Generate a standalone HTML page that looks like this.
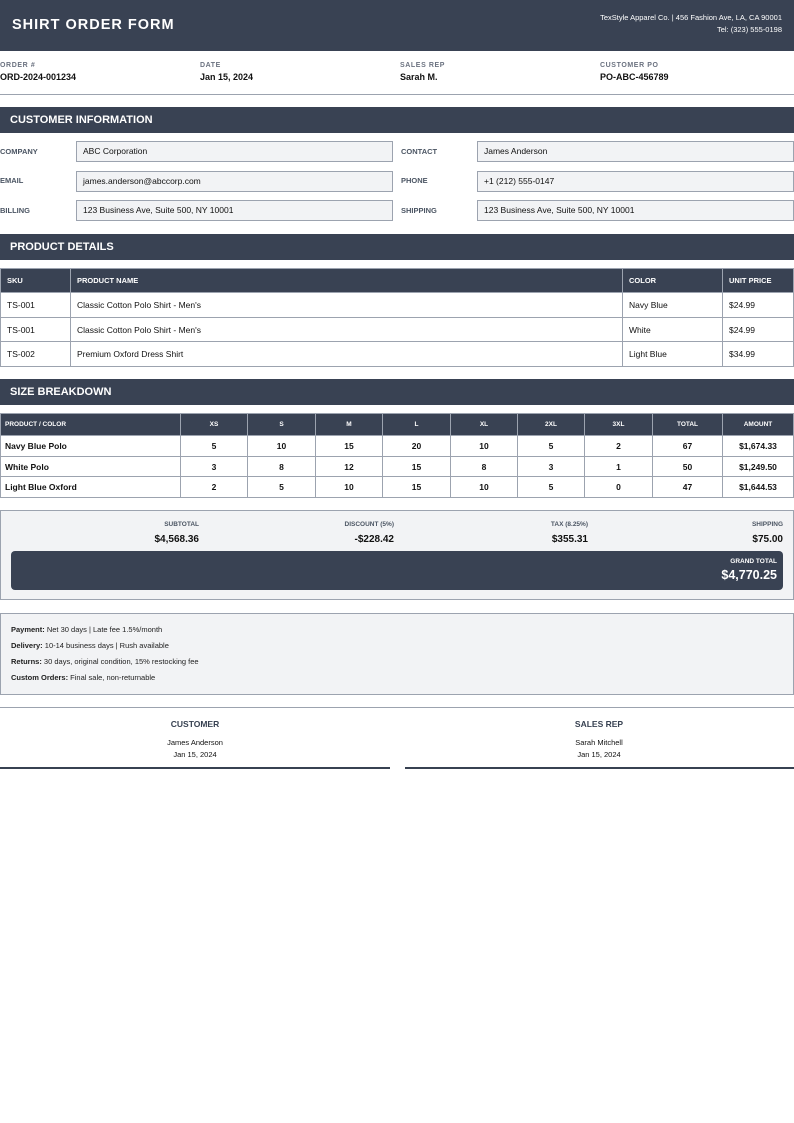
<!DOCTYPE html>
<html><head><meta charset="utf-8"><style>
*{margin:0;padding:0;box-sizing:border-box}
body{width:794px;height:1123px;background:#fff;font-family:"Liberation Sans",Arial,sans-serif;color:#111;position:relative;overflow:hidden}
.a{position:absolute;white-space:nowrap}
.dark{background:#394253;color:#fff}
.bar{position:absolute;left:0;width:794px;height:26px;background:#394253;color:#fff;font-weight:bold;font-size:11px;line-height:26px;padding-left:10px}
.lbl{font-size:7px;color:#6b7280;font-weight:bold;letter-spacing:.6px}
.val{font-size:9px;font-weight:bold}
.fl{font-size:7.5px;font-weight:bold;color:#4b5563}
.in{position:absolute;background:#f2f3f5;border:1px solid #9ca3af;font-size:8.5px;line-height:19px;padding-left:6px;height:21px}
table{position:absolute;left:0;width:794px;border-collapse:collapse;font-size:8.5px}
td,th{border:1px solid #9ca3af;padding:0 6px}
th{background:#394253;color:#fff;text-align:left;font-size:7.5px}
.sz th,.sz td{text-align:center;padding:0 4px}
.sz th{font-size:6.5px}
.sz td{font-weight:bold;font-size:8.5px}
.sz td:first-child,.sz th:first-child{text-align:left}
.r{text-align:right}
.sl{font-size:6.5px;color:#4b5563;font-weight:bold}
</style></head><body>
<div class="a dark" style="left:0;top:0;width:794px;height:51px"></div>
<div class="a" style="left:12px;top:17px;font-size:14.5px;font-weight:bold;color:#fff;letter-spacing:1px">SHIRT ORDER FORM</div>
<div class="a" style="right:12px;top:12px;font-size:7.5px;color:#fff;text-align:right;line-height:12px">TexStyle Apparel Co. | 456 Fashion Ave, LA, CA 90001<br>Tel: (323) 555-0198</div>

<div class="a lbl" style="left:0;top:62px">ORDER #</div><div class="a val" style="left:0;top:72px">ORD-2024-001234</div>
<div class="a lbl" style="left:200px;top:62px">DATE</div><div class="a val" style="left:200px;top:72px">Jan 15, 2024</div>
<div class="a lbl" style="left:400px;top:62px">SALES REP</div><div class="a val" style="left:400px;top:72px">Sarah M.</div>
<div class="a lbl" style="left:600px;top:62px">CUSTOMER PO</div><div class="a val" style="left:600px;top:72px">PO-ABC-456789</div>
<div class="a" style="left:0;top:94px;width:794px;height:1px;background:#9ca3af"></div>

<div class="bar" style="top:107px">CUSTOMER INFORMATION</div>
<div class="a fl" style="left:0;top:147px">COMPANY</div><div class="in" style="left:76px;top:141px;width:317px">ABC Corporation</div>
<div class="a fl" style="left:401px;top:147px">CONTACT</div><div class="in" style="left:477px;top:141px;width:317px">James Anderson</div>
<div class="a fl" style="left:0;top:176px">EMAIL</div><div class="in" style="left:76px;top:171px;width:317px">james.anderson@abccorp.com</div>
<div class="a fl" style="left:401px;top:176px">PHONE</div><div class="in" style="left:477px;top:171px;width:317px">+1 (212) 555-0147</div>
<div class="a fl" style="left:0;top:206px">BILLING</div><div class="in" style="left:76px;top:200px;width:317px">123 Business Ave, Suite 500, NY 10001</div>
<div class="a fl" style="left:401px;top:206px">SHIPPING</div><div class="in" style="left:477px;top:200px;width:317px">123 Business Ave, Suite 500, NY 10001</div>

<div class="bar" style="top:234px">PRODUCT DETAILS</div>
<table style="top:268px">
<tr style="height:24px"><th style="width:70px">SKU</th><th>PRODUCT NAME</th><th style="width:100px">COLOR</th><th style="width:71px">UNIT PRICE</th></tr>
<tr style="height:25px"><td>TS-001</td><td>Classic Cotton Polo Shirt - Men's</td><td>Navy Blue</td><td>$24.99</td></tr>
<tr style="height:24px"><td>TS-001</td><td>Classic Cotton Polo Shirt - Men's</td><td>White</td><td>$24.99</td></tr>
<tr style="height:25px"><td>TS-002</td><td>Premium Oxford Dress Shirt</td><td>Light Blue</td><td>$34.99</td></tr>
</table>

<div class="bar" style="top:379px">SIZE BREAKDOWN</div>
<table class="sz" style="top:413px">
<tr style="height:22px"><th style="width:180px">PRODUCT / COLOR</th><th style="width:67px">XS</th><th style="width:68px">S</th><th style="width:67px">M</th><th style="width:68px">L</th><th style="width:67px">XL</th><th style="width:67px">2XL</th><th style="width:68px">3XL</th><th style="width:70px">TOTAL</th><th>AMOUNT</th></tr>
<tr style="height:21px"><td>Navy Blue Polo</td><td>5</td><td>10</td><td>15</td><td>20</td><td>10</td><td>5</td><td>2</td><td>67</td><td>$1,674.33</td></tr>
<tr style="height:20px"><td>White Polo</td><td>3</td><td>8</td><td>12</td><td>15</td><td>8</td><td>3</td><td>1</td><td>50</td><td>$1,249.50</td></tr>
<tr style="height:21px"><td>Light Blue Oxford</td><td>2</td><td>5</td><td>10</td><td>15</td><td>10</td><td>5</td><td>0</td><td>47</td><td>$1,644.53</td></tr>
</table>

<div class="a" style="left:0;top:510px;width:794px;height:90px;background:#f2f3f5;border:1px solid #9ca3af"></div>
<div class="a sl r" style="right:595px;top:521px">SUBTOTAL</div><div class="a val r" style="right:595px;top:534px;font-size:10px">$4,568.36</div>
<div class="a sl r" style="right:400px;top:521px">DISCOUNT (5%)</div><div class="a val r" style="right:400px;top:534px;font-size:10px">-$228.42</div>
<div class="a sl r" style="right:206px;top:521px">TAX (8.25%)</div><div class="a val r" style="right:206px;top:534px;font-size:10px">$355.31</div>
<div class="a sl r" style="right:11px;top:521px">SHIPPING</div><div class="a val r" style="right:11px;top:534px;font-size:10px">$75.00</div>
<div class="a dark" style="left:11px;top:551px;width:772px;height:39px;border-radius:4px"></div>
<div class="a" style="right:17px;top:558px;font-size:6.5px;font-weight:bold;color:#fff">GRAND TOTAL</div>
<div class="a" style="right:17px;top:568px;font-size:12.5px;font-weight:bold;color:#fff">$4,770.25</div>

<div class="a" style="left:0;top:613px;width:794px;height:82px;background:#f2f3f5;border:1px solid #9ca3af"></div>
<div class="a" style="left:11px;top:622px;font-size:7.5px;line-height:16px;color:#222"><b>Payment:</b> Net 30 days | Late fee 1.5%/month<br><b>Delivery:</b> 10-14 business days | Rush available<br><b>Returns:</b> 30 days, original condition, 15% restocking fee<br><b>Custom Orders:</b> Final sale, non-returnable</div>

<div class="a" style="left:0;top:707px;width:794px;height:1px;background:#9ca3af"></div>
<div class="a" style="left:0;top:719px;width:390px;text-align:center;font-size:8.5px;font-weight:bold;color:#374151">CUSTOMER</div>
<div class="a" style="left:0;top:737px;width:390px;text-align:center;font-size:7.5px;line-height:12px">James Anderson<br>Jan 15, 2024</div>
<div class="a" style="left:0;top:767px;width:390px;height:1.5px;background:#374151"></div>
<div class="a" style="left:404px;top:719px;width:390px;text-align:center;font-size:8.5px;font-weight:bold;color:#374151">SALES REP</div>
<div class="a" style="left:404px;top:737px;width:390px;text-align:center;font-size:7.5px;line-height:12px">Sarah Mitchell<br>Jan 15, 2024</div>
<div class="a" style="left:405px;top:767px;width:389px;height:1.5px;background:#374151"></div>
</body></html>
